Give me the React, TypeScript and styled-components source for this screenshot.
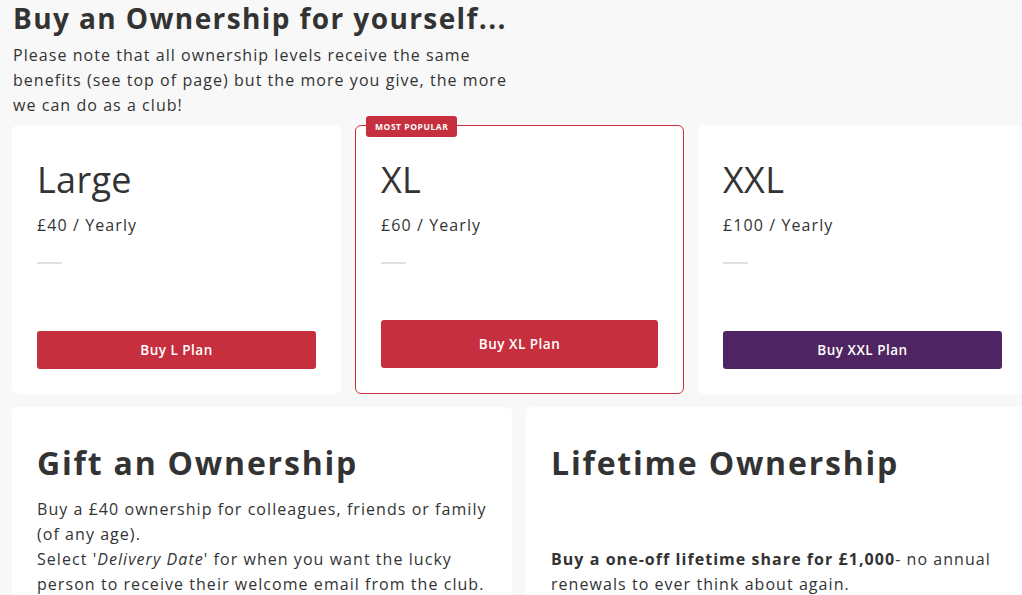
import React from "react";
import styled, { createGlobalStyle } from "styled-components";

const Global = createGlobalStyle`
  html, body { margin: 0; padding: 0; background: #f8f8f8; overflow: hidden; }
  body { font-family: "Open Sans", Lato, sans-serif; color: #333; }
  * { box-sizing: border-box; }
`;

const Page = styled.div`
  width: 1015px;
  margin-left: 12px;
`;

const Title = styled.h1`
  margin: 0 0 0 1px;
  font-size: 28px;
  line-height: 36px;
  font-weight: 700;
  letter-spacing: 1.4px;
  color: #333;
`;

const Intro = styled.p`
  margin: 7px 0 0 1px;
  width: 505px;
  font-size: 16px;
  line-height: 25px;
  letter-spacing: 1.05px;
  color: #333;
`;

const PlanRow = styled.div`
  display: grid;
  grid-template-columns: repeat(3, 329px);
  gap: 14px;
  margin-top: 7px;
  height: 269px;
`;

const PlanCard = styled.div<{ $featured?: boolean }>`
  position: relative;
  display: flex;
  flex-direction: column;
  background: #fff;
  border-radius: 6px;
  border: ${(p) => (p.$featured ? "1.5px solid #cd2f40" : "none")};
  padding: ${(p) => (p.$featured ? "32px 25px 25px 25px" : "33px 25px 25px 25px")};
`;

const Badge = styled.span`
  position: absolute;
  top: -10px;
  left: 10px;
  background: #c62f3e;
  color: #fff;
  font-size: 8.5px;
  font-weight: 700;
  letter-spacing: 0.55px;
  line-height: 21px;
  height: 21px;
  padding: 0 9px;
  border-radius: 3px;
`;

const PlanName = styled.div`
  font-size: 36px;
  font-weight: 400;
  line-height: 43px;
  letter-spacing: 0.3px;
  color: #333;
`;

const Price = styled.div`
  margin-top: 14px;
  font-size: 16px;
  line-height: 20px;
  letter-spacing: 1.1px;
  color: #333;
`;

const Rule = styled.div`
  margin-top: 27px;
  width: 25px;
  height: 2px;
  background: #e0e0e0;
`;

const BuyButton = styled.button<{ $color: string; $tall?: boolean }>`
  margin-top: auto;
  width: 100%;
  height: ${(p) => (p.$tall ? "48px" : "38px")};
  border: none;
  border-radius: 3px;
  background: ${(p) => p.$color};
  color: #fff;
  font-family: "Open Sans", Lato, sans-serif;
  font-size: 13.5px;
  font-weight: 600;
  letter-spacing: 0.5px;
`;

const InfoRow = styled.div`
  display: grid;
  grid-template-columns: repeat(2, 500px);
  gap: 14px;
  margin-top: 13px;
`;

const InfoCard = styled.div`
  background: #fff;
  border-radius: 6px;
  padding: 36px 15px 20px 25px;
  height: 220px;
`;

const InfoTitle = styled.h2`
  margin: 0;
  font-size: 32px;
  font-weight: 700;
  line-height: 40px;
  letter-spacing: 1.8px;
  color: #333;
`;

const InfoText = styled.p<{ $gap?: number }>`
  margin: ${(p) => p.$gap ?? 14}px 0 0 0;
  font-size: 16px;
  line-height: 25px;
  letter-spacing: 1.05px;
  color: #333;
`;

const plans = [
  { name: "Large", price: "£40 / Yearly", btn: "Buy L Plan", color: "#c62f3e" },
  { name: "XL", price: "£60 / Yearly", btn: "Buy XL Plan", color: "#c62f3e", featured: true },
  { name: "XXL", price: "£100 / Yearly", btn: "Buy XXL Plan", color: "#4f2462" },
];

export default function App() {
  return (
    <>
      <Global />
      <Page>
        <Title>Buy an Ownership for yourself...</Title>
        <Intro>
          Please note that all ownership levels receive the same benefits (see top of page) but the
          more you give, the more we can do as a club!
        </Intro>
        <PlanRow>
          {plans.map((p) => (
            <PlanCard key={p.name} $featured={p.featured}>
              {p.featured && <Badge>MOST POPULAR</Badge>}
              <PlanName>{p.name}</PlanName>
              <Price>{p.price}</Price>
              <Rule />
              <BuyButton $color={p.color} $tall={p.featured}>
                {p.btn}
              </BuyButton>
            </PlanCard>
          ))}
        </PlanRow>
        <InfoRow>
          <InfoCard>
            <InfoTitle>Gift an Ownership</InfoTitle>
            <InfoText>
              Buy a £40 ownership for colleagues, friends or family (of any age).
              <br />
              Select '<em>Delivery Date</em>' for when you want the lucky person to receive their
              welcome email from the club.
            </InfoText>
          </InfoCard>
          <InfoCard>
            <InfoTitle>Lifetime Ownership</InfoTitle>
            <InfoText $gap={64}>
              <strong>Buy a one-off lifetime share for £1,000</strong>- no annual renewals to ever
              think about again.
            </InfoText>
          </InfoCard>
        </InfoRow>
      </Page>
    </>
  );
}
